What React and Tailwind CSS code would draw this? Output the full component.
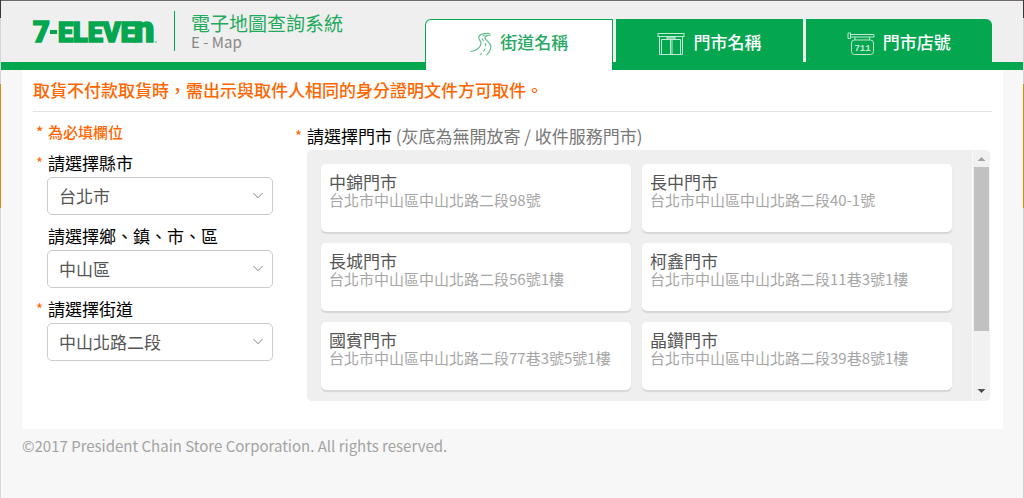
import { useState } from "react";
import clsx from "clsx";

const stores = [
  { name: "中錦門市", address: "台北市中山區中山北路二段98號" },
  { name: "長中門市", address: "台北市中山區中山北路二段40-1號" },
  { name: "長城門市", address: "台北市中山區中山北路二段56號1樓" },
  { name: "柯鑫門市", address: "台北市中山區中山北路二段11巷3號1樓" },
  { name: "國賓門市", address: "台北市中山區中山北路二段77巷3號5號1樓" },
  { name: "晶鑽門市", address: "台北市中山區中山北路二段39巷8號1樓" },
];

function Logo() {
  return (
    <svg
      className="h-8 w-[126px] overflow-visible font-['Roboto',sans-serif] font-black"
      viewBox="0 0 126 32"
      role="img"
      aria-label="7-ELEVEn"
      fill="#04a64f"
      stroke="#04a64f"
      strokeWidth="1.6"
    >
      <text x="0" y="27" fontSize="29">7</text>
      <rect x="17" y="15" width="7" height="4" stroke="none" />
      <text x="25" y="27" fontSize="27">ELEVE</text>
      <text x="101" y="27" fontSize="36">n</text>
      <circle cx="123" cy="27" r="1" stroke="none" opacity="0.5" />
    </svg>
  );
}

function StreetIcon() {
  return (
    <svg className="h-6 w-[22px]" viewBox="0 0 22 24" fill="none" stroke="currentColor" strokeWidth="1.2" strokeLinecap="round" strokeLinejoin="round" aria-hidden="true">
      <path d="M19.5 1.5 C15 1.3 9.5 2.2 8.8 5 C8.2 7.4 11 8.6 11 11.5 C11 15.5 6 18.6 1 19.5" />
      <path d="M20.5 3 C17.5 3.2 14.8 4.2 15 6 C15.2 8.4 20.8 10.2 20.8 14.8 C20.8 18.2 18.8 20.8 16.8 22.8" />
      <path d="M15 3 C12.8 3.6 11.8 4.6 12 6 C12.3 8.6 15.6 10 15.6 13.5 C15.6 17 13.6 20 10.5 22.3" strokeDasharray="2 3.6" />
    </svg>
  );
}

function StoreIcon() {
  return (
    <svg className="h-6 w-[28px]" viewBox="0 0 28 24" fill="none" stroke="currentColor" strokeWidth="1" aria-hidden="true">
      <rect x="1" y="1.5" width="26" height="3" />
      <path d="M2.5 4.5 V22.5 H25.5 V4.5 M4.5 22 V7.5 H23.5 V22 M13.5 8 V22 M15 8 V22" />
      <path d="M10 5 H18 V7.5 H10 Z" fill="currentColor" fillOpacity="0.6" />
    </svg>
  );
}

function SignIcon() {
  return (
    <svg className="h-6 w-[28px]" viewBox="0 0 28 24" fill="none" stroke="currentColor" strokeWidth="1" aria-hidden="true">
      <path d="M1 1 H3.5 V6.5 H1 Z M3.5 2.5 H27 V5 H3.5 M8 5 V8 M22.5 5 V8" />
      <rect x="4.5" y="8" width="22" height="14.5" rx="3" />
      <text x="15.5" y="18.5" textAnchor="middle" fontSize="9" fill="currentColor" stroke="none" className="font-['Liberation_Mono',monospace] font-bold">711</text>
    </svg>
  );
}

function Star() {
  return <span className="w-3 shrink-0 text-[15px] text-[#ff6600]">*</span>;
}

function SelectField({ id, label, value, required }) {
  return (
    <div>
      <label htmlFor={id} className="flex h-7 items-center text-[17px] text-black">
        {required ? <Star /> : <span className="w-3 shrink-0" />}
        {label}
      </label>
      <div className="grid pl-[11px]">
        <select
          id={id}
          defaultValue={value}
          className="col-start-1 row-start-1 h-[38px] w-full appearance-none rounded-[5px] border border-[#ccc] bg-white px-[11px] text-[17px] text-[#555]"
        >
          <option>{value}</option>
        </select>
        <svg className="pointer-events-none col-start-1 row-start-1 mr-[9px] h-3 w-3 self-center justify-self-end" viewBox="0 0 12 12" fill="none" stroke="#888" strokeWidth="1" aria-hidden="true">
          <path d="M1.5 3 L6 7.8 L10.5 3" />
        </svg>
      </div>
    </div>
  );
}

const tabs = [
  { id: "street", label: "街道名稱", Icon: StreetIcon, corner: "rounded-tl-[6px]" },
  { id: "store", label: "門市名稱", Icon: StoreIcon, corner: "" },
  { id: "number", label: "門市店號", Icon: SignIcon, corner: "rounded-tr-[6px]" },
];

export default function App() {
  const [active, setActive] = useState("street");
  const [picked, setPicked] = useState(null);

  return (
    <div className="flex min-h-screen bg-[#f7f7f7] font-['Noto_Sans_CJK_TC',sans-serif] leading-[20px]">
      <div className="flex w-px shrink-0 flex-col" aria-hidden="true">
        <div className="h-[18px] bg-[#3c363a]" />
        <div className="h-[66px] bg-[#d5d5d5]" />
        <div className="h-[124px] bg-[#d58d12]" />
        <div className="grow bg-[#ddd8cd]" />
      </div>

      <div className="flex min-w-0 grow flex-col border-t border-[#6f696d]">
        <header className="flex h-[69px] border-b-[8px] border-[#04a64f] bg-[#efefef]">
          <div className="flex grow items-start pl-8">
            <div className="mt-[14px]"><Logo /></div>
            <div className="mt-[10px] ml-[15px] h-10 w-px bg-[#04a64f]" />
            <div className="mt-3 ml-4">
              <h1 className="text-[19px] leading-[20px] text-[#1faa5c]">電子地圖查詢系統</h1>
              <p className="text-[15px] leading-[18px] text-[#888]">E - Map</p>
            </div>
          </div>
          <nav className="mr-[31px] -mb-[8px] flex w-[567px] shrink-0 gap-[3px] pt-[18px]">
            {tabs.map(({ id, label, Icon, corner }) => (
              <button
                key={id}
                type="button"
                onClick={() => setActive(id)}
                className={clsx(
                  "flex flex-1 items-start justify-center gap-2 text-[17px] font-medium",
                  corner,
                  id === active
                    ? "border border-b-0 border-[#04a64f] bg-white pt-3 text-[#2aa966]"
                    : "mb-[8px] bg-[#04a64f] pt-[13px] text-white"
                )}
              >
                <span className="opacity-75"><Icon /></span>
                <span className="leading-[20px]">{label}</span>
              </button>
            ))}
          </nav>
        </header>

        <main className="mr-[20px] ml-[21px] bg-white px-[11px] pt-2 pb-7">
          <p className="border-b border-[#e3e3e3] pt-[2px] pb-[11px] text-[17px] font-medium text-[#ff6600]">
            取貨不付款取貨時，需出示與取件人相同的身分證明文件方可取件。
          </p>

          <div className="flex">
            <form className="w-[262px] shrink-0 pt-[10px] pr-[22px] pl-[3px]">
              <p className="flex text-[15px] font-medium text-[#ff6600]"><Star />為必填欄位</p>
              <div className="mt-[7px] flex flex-col gap-[7px]">
                <SelectField id="city" label="請選擇縣市" value="台北市" required />
                <SelectField id="district" label="請選擇鄉、鎮、市、區" value="中山區" />
                <SelectField id="road" label="請選擇街道" value="中山北路二段" required />
              </div>
            </form>

            <section className="min-w-0 grow pt-[14px]">
              <h2 className="flex text-[17px] text-black">
                <Star />
                <span>請選擇門市 <span className="text-[#777]">(灰底為無開放寄 / 收件服務門市)</span></span>
              </h2>
              <div className="mt-1 mr-[2px] ml-3 flex overflow-hidden rounded-[5px] bg-[#efefef]">
                <ul className="grid grow grid-cols-2 gap-[11px] pt-[14px] pr-5 pb-[11px] pl-[14px]">
                  {stores.map((s) => (
                    <li key={s.name}>
                      <button
                        type="button"
                        aria-pressed={picked === s.name}
                        onClick={() => setPicked(s.name)}
                        className="flex h-[68px] w-full flex-col rounded-[5px] bg-white px-2 pt-2 text-left shadow-[0_2px_1px_#d6d6d6]"
                      >
                        <span className="text-[17px] leading-[19px] text-[#555]">{s.name}</span>
                        <span className="text-[15px] leading-[18px] text-[#a6a6a6]">{s.address}</span>
                      </button>
                    </li>
                  ))}
                </ul>
                <div className="flex w-[18px] shrink-0 flex-col items-center border-l border-[#f8f8f8] bg-[#f1f1f1]" aria-hidden="true">
                  <svg className="h-[17px] w-[17px]" viewBox="0 0 17 17" fill="#a3a3a3"><path d="M4.5 11 L8.5 7 L12.5 11 Z" /></svg>
                  <div className="h-[164px] w-[15px] bg-[#c1c1c1]" />
                  <svg className="mt-auto h-[20px] w-[17px]" viewBox="0 0 17 20" fill="#505050"><path d="M4.5 8 L8.5 12 L12.5 8 Z" /></svg>
                </div>
              </div>
            </section>
          </div>
        </main>

        <footer className="px-[21px] pt-[7px] text-[15px] text-[#a3a3a3]">
          ©2017 President Chain Store Corporation. All rights reserved.
        </footer>
      </div>

      <div className="flex w-px shrink-0 flex-col" aria-hidden="true">
        <div className="h-[18px] bg-[#3c363a]" />
        <div className="h-[66px] bg-[#d5d5d5]" />
        <div className="h-[124px] bg-[#d58d12]" />
        <div className="grow bg-[#d2d2d2]" />
      </div>
    </div>
  );
}
